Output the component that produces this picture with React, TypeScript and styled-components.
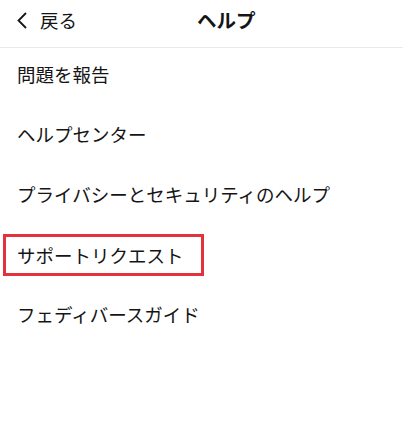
import styled, { createGlobalStyle } from 'styled-components';

const GlobalStyle = createGlobalStyle`
  html, body {
    margin: 0;
    padding: 0;
    background: #fff;
  }
  body {
    font-family: "Noto Sans CJK JP", "Noto Sans", sans-serif;
    color: #151515;
  }
`;

const Page = styled.div`
  width: 403px;
  min-height: 444px;
  background: #fff;
`;

const Header = styled.header`
  height: 48px;
  box-sizing: border-box;
  display: flex;
  align-items: center;
  padding: 0 0 7px 17px;
  border-bottom: 1px solid #e8e8e8;
`;

const BackButton = styled.button`
  display: flex;
  align-items: center;
  gap: 13px;
  border: none;
  background: none;
  padding: 0;
  font: inherit;
  font-size: 18.5px;
  line-height: 24px;
  color: #151515;
  cursor: pointer;
`;

const Title = styled.h1`
  margin: 0 0 0 120px;
  font-size: 19.5px;
  line-height: 24px;
  font-weight: 700;
`;

const List = styled.ul`
  list-style: none;
  margin: 0;
  padding: 0;
`;

const Item = styled.li`
  height: 60px;
  box-sizing: border-box;
  padding: 14px 0 0 17px;
`;

const Label = styled.span<{ $highlighted?: boolean }>`
  display: inline-block;
  font-size: 18.5px;
  line-height: 24px;
  ${({ $highlighted }) =>
    $highlighted &&
    `
    margin: -8px 0 0 -14px;
    padding: 6px 17px 6px 11px;
    border: 3px solid #e2323b;
  `}
`;

const items = [
  { label: '問題を報告' },
  { label: 'ヘルプセンター' },
  { label: 'プライバシーとセキュリティのヘルプ' },
  { label: 'サポートリクエスト', highlighted: true },
  { label: 'フェディバースガイド' },
];

export default function App() {
  return (
    <Page>
      <GlobalStyle />
      <Header>
        <BackButton type="button">
          <svg width="10" height="17" viewBox="0 0 10 17" fill="none">
            <polyline points="9,1 1.5,8.5 9,16" stroke="#151515" strokeWidth="1.8" />
          </svg>
          戻る
        </BackButton>
        <Title>ヘルプ</Title>
      </Header>
      <List>
        {items.map(item => (
          <Item key={item.label}>
            <Label $highlighted={item.highlighted}>{item.label}</Label>
          </Item>
        ))}
      </List>
    </Page>
  );
}
